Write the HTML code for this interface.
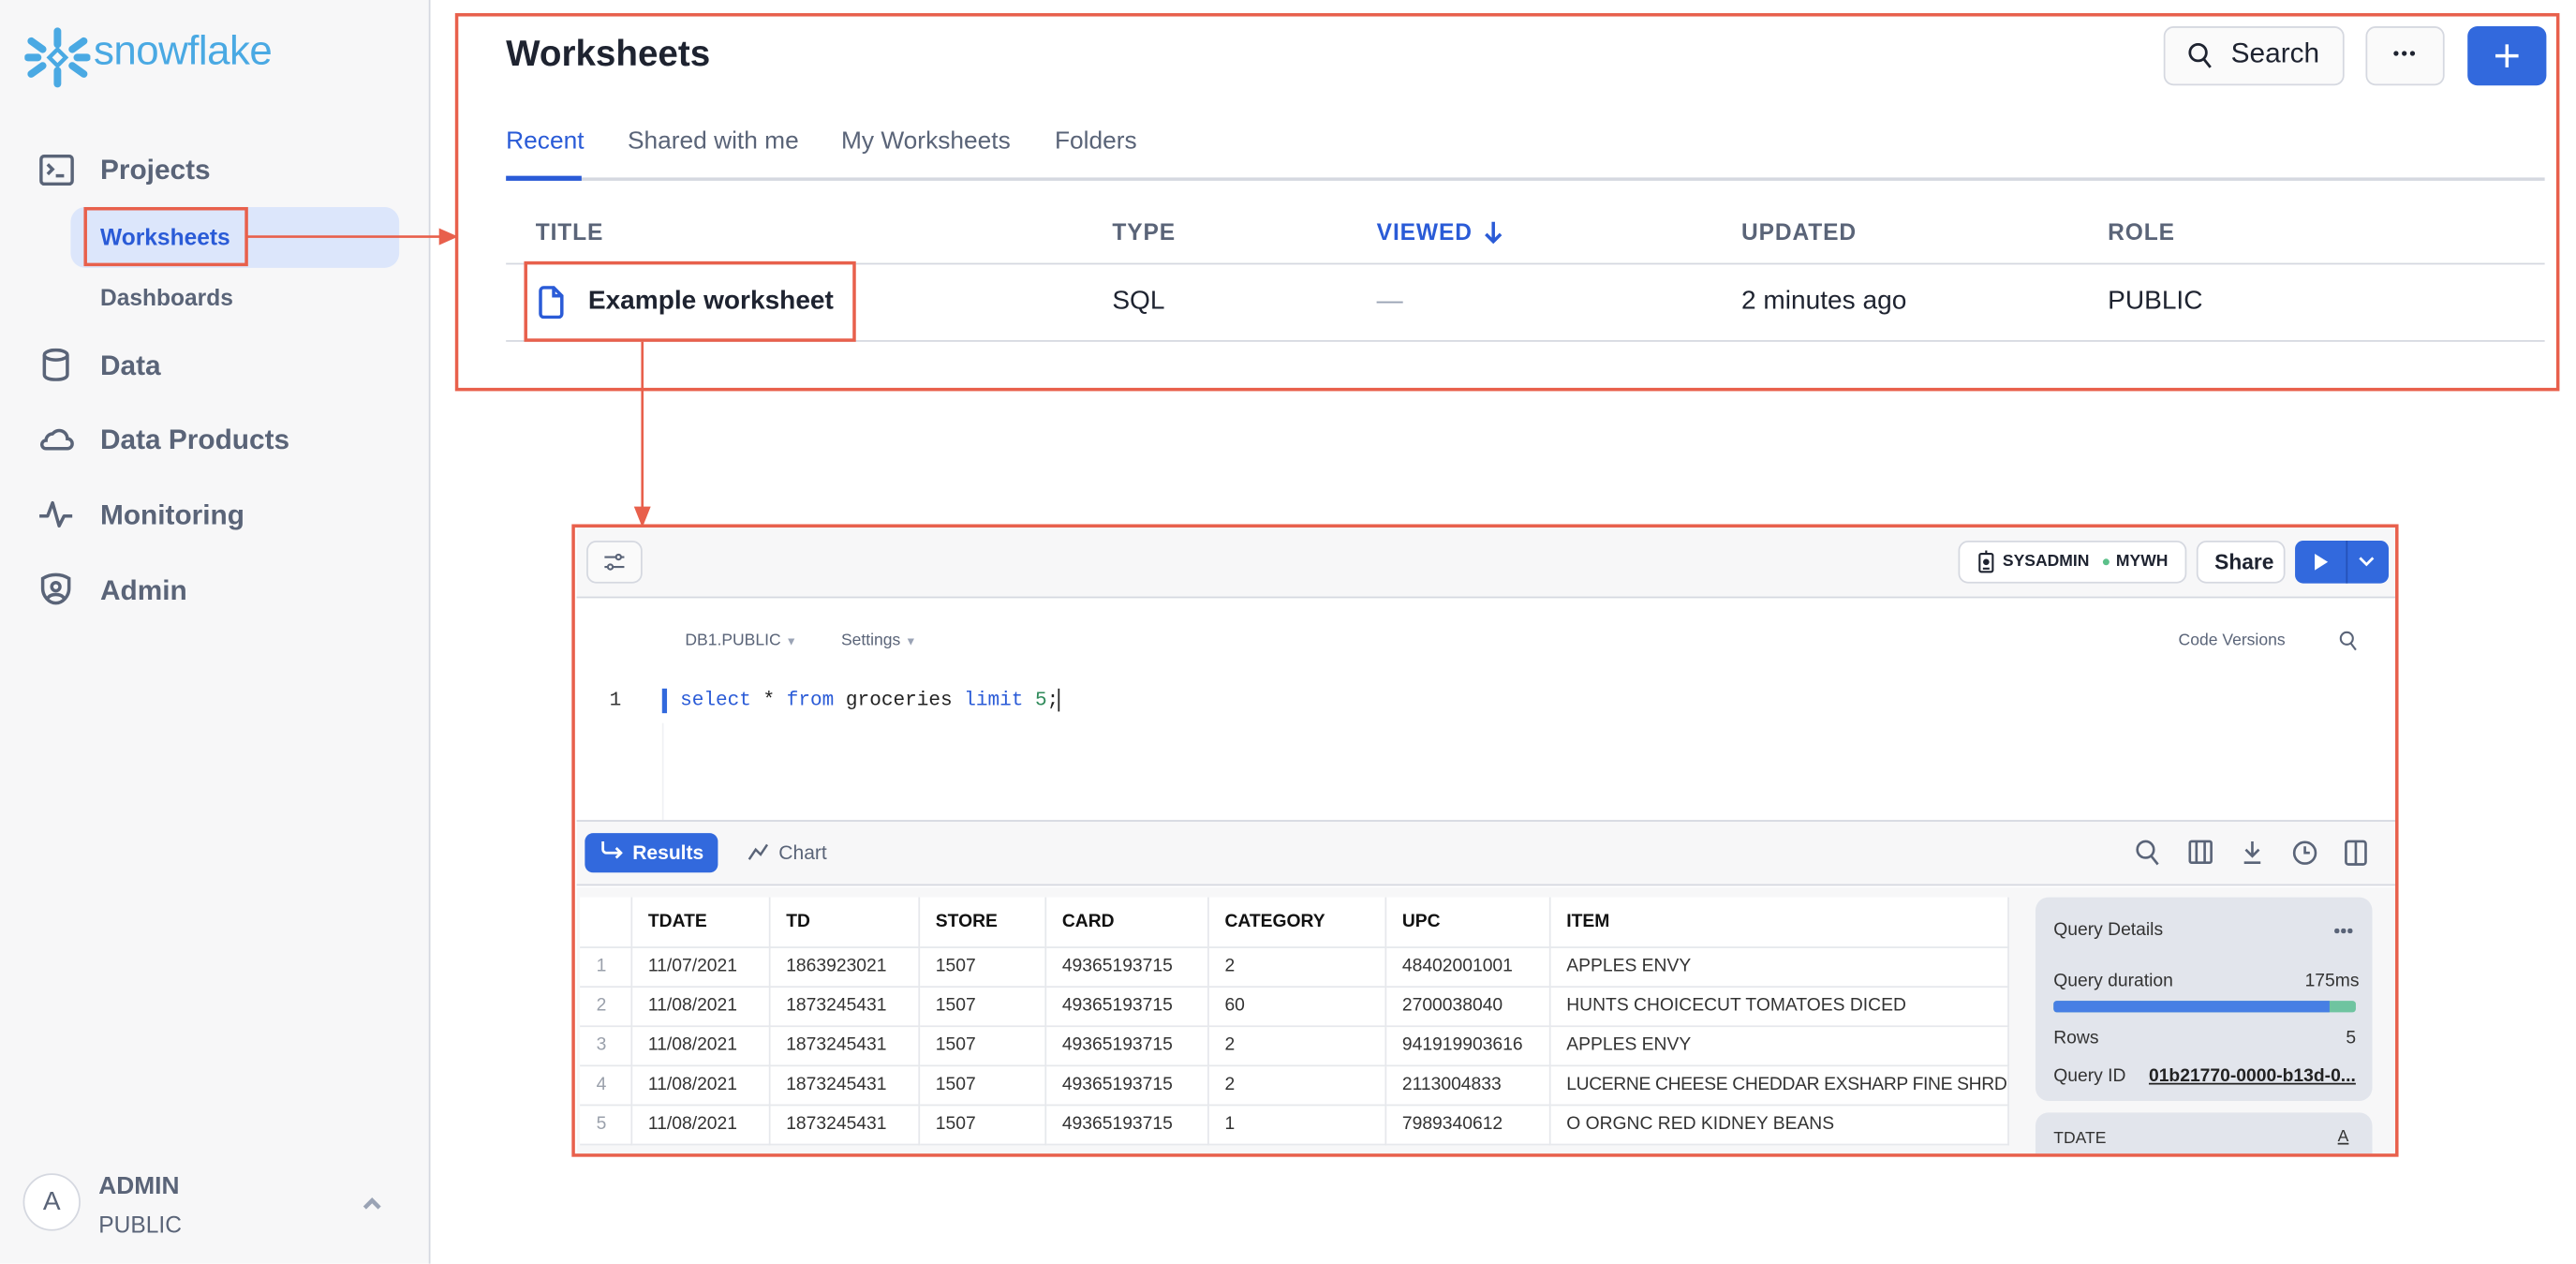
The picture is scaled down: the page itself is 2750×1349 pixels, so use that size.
<!DOCTYPE html>
<html><head><meta charset="utf-8"><style>
*{box-sizing:border-box;margin:0;padding:0}
html,body{width:2750px;height:1348px;overflow:hidden;background:#fff}
#w{position:absolute;left:0;top:0;width:1568px;height:769px;transform:scale(1.7538);transform-origin:0 0;font-family:"Liberation Sans",sans-serif;color:#1e2330}
.a{position:absolute;white-space:nowrap}
.nav{font-size:17px;font-weight:bold;color:#5a6478;transform:translateY(-50%)}
.c{transform:translateY(-50%)}
.th{font-size:14px;font-weight:bold;color:#5a6478;letter-spacing:.5px}
.red{position:absolute;border:2px solid #e8604c}
.btn{position:absolute;border:1px solid #d5d8e0;border-radius:6px;background:#fafafa}
table{border-collapse:collapse;font-size:11px;color:#333;table-layout:fixed}
td{height:24px;border-right:1px solid #e6e8ec;border-bottom:1px solid #e6e8ec;padding-left:10px;white-space:nowrap;overflow:hidden}
tr.h td{height:30px;font-weight:bold;color:#111}
td.n{color:#9aa0ab;padding-left:10px}
.dot{position:absolute;border-radius:50%}
</style></head><body><div id="w">
<!-- sidebar -->
<div class="a" style="left:0;top:0;width:262px;height:769px;background:#f7f7f8;border-right:1px solid #d5d8e0"></div>
<svg class="a" style="left:15px;top:16px" width="40" height="38" viewBox="0 0 40 38" fill="#4aa9e3">
<g stroke="#4aa9e3" stroke-width="4.5" stroke-linecap="round"><line x1="20" y1="3" x2="20" y2="11"/><line x1="20" y1="27" x2="20" y2="35"/><line x1="4" y1="9" x2="11" y2="14"/><line x1="29" y1="24" x2="36" y2="29"/><line x1="4" y1="29" x2="11" y2="24"/><line x1="29" y1="14" x2="36" y2="9"/><line x1="2" y1="19" x2="8" y2="19"/><line x1="32" y1="19" x2="38" y2="19"/></g>
<path d="M20 14 L25 19 L20 24 L15 19Z" fill="none" stroke="#4aa9e3" stroke-width="2.5"/></svg>
<div class="a" style="left:57px;top:17px;font-size:25px;color:#4aa9e3;letter-spacing:-0.3px">snowflake</div>
<svg class="a" style="left:24px;top:94px" width="21" height="19" viewBox="0 0 21 19" fill="none" stroke="#5a6478" stroke-width="2"><rect x="1" y="1" width="19" height="17" rx="2"/><path d="M5 6l3 3-3 3M10 13h5"/></svg>
<div class="a nav" style="left:61px;top:104px">Projects</div>
<div class="a" style="left:43px;top:126px;width:200px;height:37px;background:#dce6fb;border-radius:9px"></div>
<div class="a" style="left:61px;top:144px;font-size:14px;font-weight:bold;color:#2a5bd7;transform:translateY(-50%)">Worksheets</div>
<div class="red" style="left:51px;top:126px;width:100px;height:36px"></div>
<div class="a" style="left:61px;top:181px;font-size:14px;font-weight:bold;color:#5a6478;transform:translateY(-50%)">Dashboards</div>
<svg class="a" style="left:25px;top:212px" width="18" height="20" viewBox="0 0 18 20" fill="none" stroke="#5a6478" stroke-width="2"><ellipse cx="9" cy="4" rx="7" ry="3"/><path d="M2 4v12c0 2 3 3 7 3s7-1 7-3V4"/></svg>
<div class="a nav" style="left:61px;top:223px">Data</div>
<svg class="a" style="left:23px;top:259px" width="22" height="16" viewBox="0 0 22 16" fill="none" stroke="#5a6478" stroke-width="2"><path d="M5 14h13a3 3 0 000-6 5 5 0 00-9-3 4 4 0 00-4 4 2.5 2.5 0 000 5z"/></svg>
<div class="a nav" style="left:61px;top:268px">Data Products</div>
<svg class="a" style="left:23px;top:303px" width="22" height="20" viewBox="0 0 22 20" fill="none" stroke="#5a6478" stroke-width="2" stroke-linejoin="round"><path d="M1 11h5l3-8 4 14 3-6h5"/></svg>
<div class="a nav" style="left:61px;top:314px">Monitoring</div>
<svg class="a" style="left:24px;top:348px" width="20" height="21" viewBox="0 0 20 21" fill="none" stroke="#5a6478" stroke-width="2"><path d="M2 4c5-3 11-3 16 0v6c0 5-4 9-8 9s-8-4-8-9z"/><circle cx="10" cy="9" r="2.5"/><path d="M5 16c2-3 8-3 10 0"/></svg>
<div class="a nav" style="left:61px;top:360px">Admin</div>
<div class="a" style="left:14px;top:714px;width:35px;height:35px;border-radius:50%;background:#fff;border:1px solid #d5d8e0;font-size:16px;color:#5a6478;text-align:center;line-height:33px">A</div>
<div class="a" style="left:60px;top:722px;font-size:15px;font-weight:bold;color:#5a6478;transform:translateY(-50%)">ADMIN</div>
<div class="a" style="left:60px;top:745px;font-size:14px;color:#5a6478;transform:translateY(-50%)">PUBLIC</div>
<svg class="a" style="left:220px;top:728px" width="13" height="9" viewBox="0 0 13 9" fill="none" stroke="#9aa3b5" stroke-width="2.5"><path d="M2 7l4.5-4.5L11 7"/></svg>

<!-- top panel -->
<div class="red" style="left:277px;top:8px;width:1281px;height:230px"></div>
<div class="a c" style="left:308px;top:33px;font-size:22px;font-weight:bold">Worksheets</div>
<div class="btn" style="left:1317px;top:16px;width:110px;height:36px"></div>
<svg class="a" style="left:1332px;top:26px" width="15" height="16" viewBox="0 0 15 16" fill="none" stroke="#1e2330" stroke-width="1.6"><circle cx="6" cy="6" r="5"/><path d="M9.5 10l4 5"/></svg>
<div class="a c" style="left:1358px;top:33px;font-size:17px">Search</div>
<div class="btn" style="left:1440px;top:16px;width:48px;height:36px"></div>
<div class="dot" style="left:1457px;top:31px;width:3px;height:3px;background:#1e2330"></div>
<div class="dot" style="left:1462px;top:31px;width:3px;height:3px;background:#1e2330"></div>
<div class="dot" style="left:1467px;top:31px;width:3px;height:3px;background:#1e2330"></div>
<div class="a" style="left:1502px;top:16px;width:48px;height:36px;background:#3269dd;border-radius:6px"></div>
<div class="a" style="left:1519px;top:33px;width:14px;height:2px;background:#fff"></div>
<div class="a" style="left:1525px;top:27px;width:2px;height:14px;background:#fff"></div>
<div class="a c" style="left:308px;top:86px;font-size:15px;color:#2a5bd7">Recent</div>
<div class="a c" style="left:382px;top:86px;font-size:15px;color:#5a6478">Shared with me</div>
<div class="a c" style="left:512px;top:86px;font-size:15px;color:#5a6478">My Worksheets</div>
<div class="a c" style="left:642px;top:86px;font-size:15px;color:#5a6478">Folders</div>
<div class="a" style="left:308px;top:108px;width:1241px;height:2px;background:#d5d8e0"></div>
<div class="a" style="left:308px;top:107px;width:46px;height:3px;background:#2a5bd7"></div>
<div class="a c th" style="left:326px;top:141px">TITLE</div>
<div class="a c th" style="left:677px;top:141px">TYPE</div>
<div class="a c th" style="left:838px;top:141px;color:#2a5bd7">VIEWED</div>
<svg class="a" style="left:903px;top:134px" width="12" height="15" viewBox="0 0 12 15" fill="none" stroke="#2a5bd7" stroke-width="2"><path d="M6 1v12M1.5 8.5L6 13l4.5-4.5"/></svg>
<div class="a c th" style="left:1060px;top:141px">UPDATED</div>
<div class="a c th" style="left:1283px;top:141px">ROLE</div>
<div class="a" style="left:308px;top:160px;width:1241px;height:1px;background:#d5d8e0"></div>
<svg class="a" style="left:327px;top:174px" width="17" height="20" viewBox="0 0 17 20" fill="none" stroke="#2a5bd7" stroke-width="2"><path d="M2 3a2 2 0 012-2h6l5 5v11a2 2 0 01-2 2H4a2 2 0 01-2-2z M10 1v5h5"/></svg>
<div class="a c" style="left:358px;top:184px;font-size:16px;font-weight:bold">Example worksheet</div>
<div class="a c" style="left:677px;top:184px;font-size:16px">SQL</div>
<div class="a c" style="left:838px;top:184px;font-size:16px;color:#9aa3b5">—</div>
<div class="a c" style="left:1060px;top:184px;font-size:16px">2 minutes ago</div>
<div class="a c" style="left:1283px;top:184px;font-size:16px">PUBLIC</div>
<div class="a" style="left:308px;top:207px;width:1241px;height:1px;background:#d5d8e0"></div>
<div class="red" style="left:319px;top:159px;width:202px;height:49px"></div>

<!-- arrows -->
<svg class="a" style="left:0;top:0" width="1568" height="769"><g stroke="#e8604c" stroke-width="1.5" fill="#e8604c"><line x1="150" y1="144" x2="270" y2="144"/><path d="M268 140l9 4-9 4z"/><line x1="391" y1="208" x2="391" y2="311"/><path d="M387 309l4 10 4-10z"/></g></svg>

<!-- worksheet editor -->
<div class="a" style="left:351px;top:321px;width:1107px;height:381px;background:#fff"></div>
<div class="a" style="left:351px;top:321px;width:1107px;height:43px;background:#f7f7f8;border-bottom:1px solid #d5d8e0"></div>
<div class="btn" style="left:357px;top:329px;width:34px;height:26px"></div>
<svg class="a" style="left:367px;top:335px" width="14" height="14" viewBox="0 0 14 14" fill="none" stroke="#5a6478" stroke-width="1.2"><path d="M1 4h7M11 4h2M1 10h2M6 10h7"/><circle cx="9.5" cy="4" r="1.5"/><circle cx="4.5" cy="10" r="1.5"/></svg>
<div class="btn" style="left:1192px;top:329px;width:139px;height:26px;background:#fff"></div>
<svg class="a" style="left:1204px;top:335px" width="10" height="14" viewBox="0 0 10 14" fill="none" stroke="#1e2330" stroke-width="1.2"><rect x="1" y="2" width="8" height="11" rx="1"/><circle cx="5" cy="7" r="1.3" fill="#1e2330"/><path d="M3 11h4M5 0v2"/></svg>
<div class="a c" style="left:1219px;top:342px;font-size:10px;font-weight:bold">SYSADMIN</div>
<div class="a" style="left:1280px;top:340px;width:4px;height:4px;border-radius:50%;background:#5cc08a"></div>
<div class="a c" style="left:1288px;top:342px;font-size:10px;font-weight:bold">MYWH</div>
<div class="btn" style="left:1337px;top:329px;width:54px;height:26px;background:#fff"></div>
<div class="a c" style="left:1348px;top:342px;font-size:13px;font-weight:bold">Share</div>
<div class="a" style="left:1397px;top:329px;width:57px;height:26px;background:#3269dd;border-radius:5px"></div>
<div class="a" style="left:1428px;top:329px;width:1px;height:26px;background:#2451b8"></div>
<svg class="a" style="left:1408px;top:336px" width="10" height="12" viewBox="0 0 10 12"><path d="M1 1l8 5-8 5z" fill="#fff"/></svg>
<svg class="a" style="left:1435px;top:338px" width="11" height="8" viewBox="0 0 11 8" fill="none" stroke="#fff" stroke-width="1.6"><path d="M1.5 1.5l4 4 4-4"/></svg>
<div class="a c" style="left:417px;top:390px;font-size:10px;color:#5a6478">DB1.PUBLIC <span style="font-size:7px;color:#9aa3b5">▼</span></div>
<div class="a c" style="left:512px;top:390px;font-size:10px;color:#5a6478">Settings <span style="font-size:7px;color:#9aa3b5">▼</span></div>
<div class="a c" style="left:1326px;top:390px;font-size:10px;color:#5a6478">Code Versions</div>
<svg class="a" style="left:1424px;top:384px" width="11" height="12" viewBox="0 0 11 12" fill="none" stroke="#5a6478" stroke-width="1.2"><circle cx="4.5" cy="4.5" r="3.7"/><path d="M7 7.5l3 4"/></svg>
<div class="a" style="left:403px;top:440px;width:1px;height:59px;background:#f0f1f4"></div>
<div class="a c" style="left:371px;top:426px;font-size:12px;font-family:'Liberation Mono',monospace;color:#333">1</div>
<div class="a" style="left:403px;top:419px;width:3px;height:15px;background:#3269dd"></div>
<div class="a c" style="left:414px;top:426px;font-size:12px;font-family:'Liberation Mono',monospace;color:#222"><span style="color:#2a5bd7">select</span> * <span style="color:#2a5bd7">from</span> groceries <span style="color:#2a5bd7">limit</span> <span style="color:#2f8a5a">5</span>;<span style="border-left:1px solid #222"></span></div>
<div class="a" style="left:351px;top:499px;width:1107px;height:40px;background:#f7f7f8;border-top:1px solid #d5d8e0;border-bottom:1px solid #d5d8e0"></div>
<div class="a" style="left:356px;top:507px;width:81px;height:24px;background:#3269dd;border-radius:5px"></div>
<svg class="a" style="left:365px;top:512px" width="14" height="13" viewBox="0 0 14 13" fill="none" stroke="#fff" stroke-width="1.6"><path d="M2 0v5c0 1 1 2 2 2h9M10 4l3 3-3 3"/></svg>
<div class="a c" style="left:385px;top:519px;font-size:12px;color:#fff;font-weight:bold">Results</div>
<svg class="a" style="left:455px;top:513px" width="13" height="11" viewBox="0 0 13 11" fill="none" stroke="#5a6478" stroke-width="1.4"><path d="M1 10l4-6 3 3 4-6"/></svg>
<div class="a c" style="left:474px;top:519px;font-size:12px;color:#5a6478">Chart</div>
<svg class="a" style="left:1298px;top:510px" width="150" height="18" viewBox="0 0 150 18" fill="none" stroke="#5a6478" stroke-width="1.5">
<circle cx="8" cy="7" r="5"/><path d="M11.5 11l4 5"/>
<rect x="35" y="2" width="13" height="13" rx="1"/><path d="M39 2v13M44 2v13"/>
<path d="M73 2v9M69 7l4 4 4-4M68 15h10"/>
<circle cx="105" cy="9" r="6.5"/><path d="M105 5v4h3"/>
<rect x="130" y="2" width="12" height="14" rx="1.5"/><path d="M136 2v14"/></svg>
<div class="a" style="left:351px;top:540px;width:1107px;height:162px;background:#f7f7f8"></div>
<table class="a" style="left:353px;top:546px;background:#fff;width:869px">
<colgroup><col style="width:31px"><col style="width:84px"><col style="width:91px"><col style="width:77px"><col style="width:99px"><col style="width:108px"><col style="width:100px"><col style="width:279px"></colgroup>
<tr class="h"><td></td><td>TDATE</td><td>TD</td><td>STORE</td><td>CARD</td><td>CATEGORY</td><td>UPC</td><td>ITEM</td></tr>
<tr><td class="n">1</td><td>11/07/2021</td><td>1863923021</td><td>1507</td><td>49365193715</td><td>2</td><td>48402001001</td><td>APPLES ENVY</td></tr>
<tr><td class="n">2</td><td>11/08/2021</td><td>1873245431</td><td>1507</td><td>49365193715</td><td>60</td><td>2700038040</td><td>HUNTS CHOICECUT TOMATOES DICED</td></tr>
<tr><td class="n">3</td><td>11/08/2021</td><td>1873245431</td><td>1507</td><td>49365193715</td><td>2</td><td>941919903616</td><td>APPLES ENVY</td></tr>
<tr><td class="n">4</td><td>11/08/2021</td><td>1873245431</td><td>1507</td><td>49365193715</td><td>2</td><td>2113004833</td><td style="letter-spacing:-0.2px">LUCERNE CHEESE CHEDDAR EXSHARP FINE SHRD</td></tr>
<tr><td class="n">5</td><td>11/08/2021</td><td>1873245431</td><td>1507</td><td>49365193715</td><td>1</td><td>7989340612</td><td>O ORGNC RED KIDNEY BEANS</td></tr>
</table>
<div class="a" style="left:1239px;top:546px;width:205px;height:124px;background:#e2e5ec;border-radius:8px"></div>
<div class="a c" style="left:1250px;top:566px;font-size:11px;color:#333">Query Details</div>
<div class="dot" style="left:1421px;top:565px;width:2.5px;height:2.5px;background:#5a6478"></div>
<div class="dot" style="left:1425px;top:565px;width:2.5px;height:2.5px;background:#5a6478"></div>
<div class="dot" style="left:1429px;top:565px;width:2.5px;height:2.5px;background:#5a6478"></div>
<div class="a c" style="left:1250px;top:597px;font-size:11px;color:#333">Query duration</div>
<div class="a c" style="left:1403px;top:597px;font-size:11px;color:#333">175ms</div>
<div class="a" style="left:1250px;top:609px;width:184px;height:7px;border-radius:2px;background:#6fc4a0"></div>
<div class="a" style="left:1250px;top:609px;width:168px;height:7px;border-radius:2px 0 0 2px;background:#477fe4"></div>
<div class="a c" style="left:1250px;top:632px;font-size:11px;color:#333">Rows</div>
<div class="a c" style="left:1428px;top:632px;font-size:11px;color:#333">5</div>
<div class="a c" style="left:1250px;top:655px;font-size:11px;color:#333">Query ID</div>
<div class="a c" style="left:1308px;top:655px;font-size:11px;color:#222;font-weight:bold;text-decoration:underline">01b21770-0000-b13d-0...</div>
<div class="a" style="left:1239px;top:677px;width:205px;height:25px;background:#e2e5ec;border-radius:8px 8px 0 0"></div>
<div class="a c" style="left:1250px;top:693px;font-size:10px;color:#333">TDATE</div>
<div class="a c" style="left:1423px;top:692px;font-size:10px;color:#333;text-decoration:underline">A</div>
<div class="red" style="left:348px;top:319px;width:1112px;height:385px"></div>
</div></body></html>
